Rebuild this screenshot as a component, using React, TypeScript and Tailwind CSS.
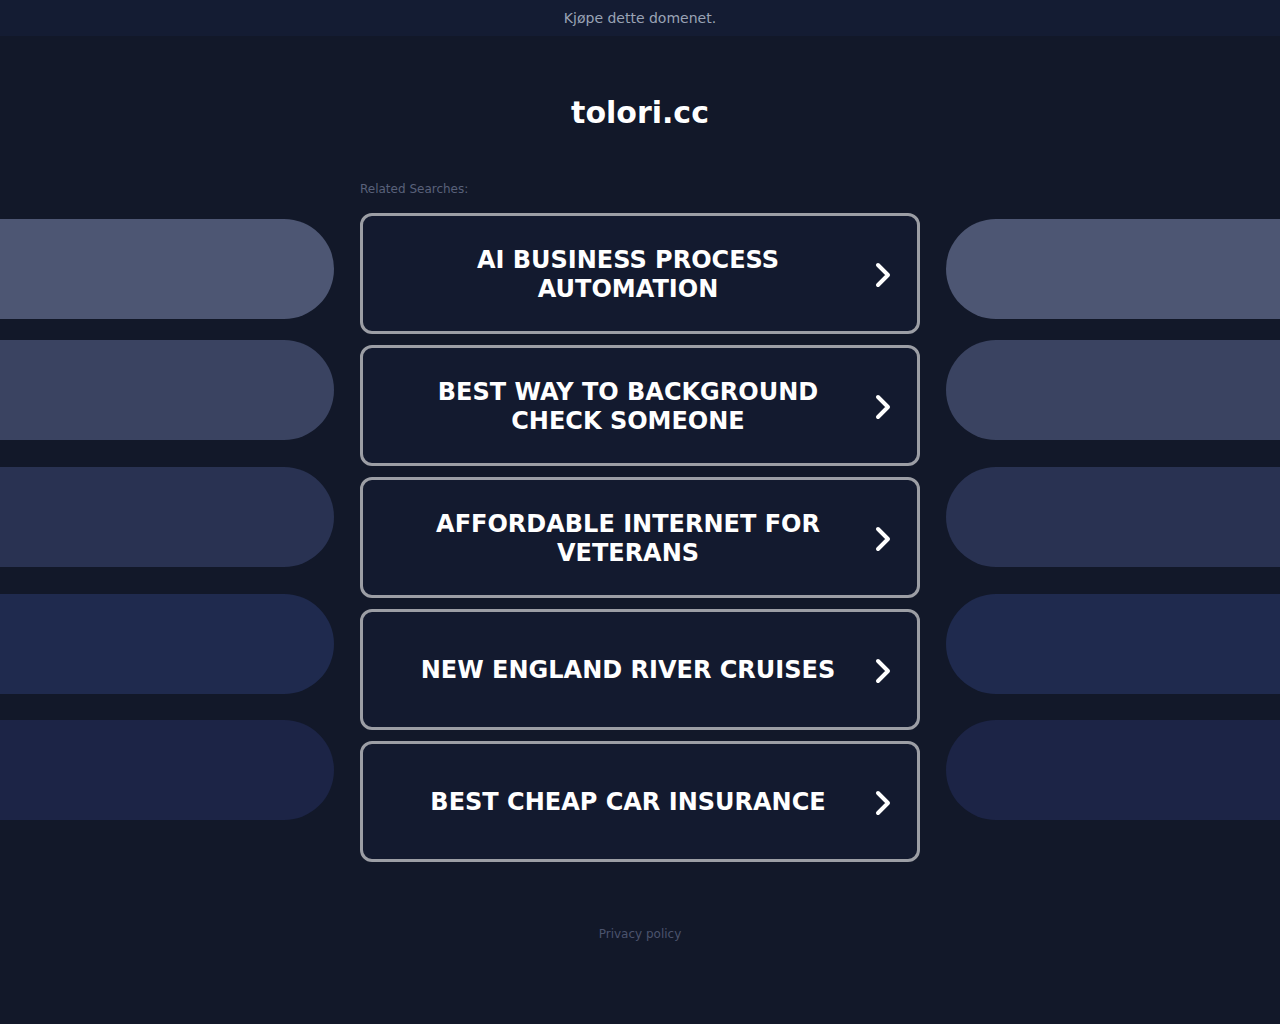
import React from "react";

const searches = [
  ["AI BUSINESS PROCESS", "AUTOMATION"],
  ["BEST WAY TO BACKGROUND", "CHECK SOMEONE"],
  ["AFFORDABLE INTERNET FOR", "VETERANS"],
  ["NEW ENGLAND RIVER CRUISES"],
  ["BEST CHEAP CAR INSURANCE"],
];

const pills = [
  { color: "bg-[#4d5673]", mt: "mt-0" },
  { color: "bg-[#3a4361]", mt: "mt-[21px]" },
  { color: "bg-[#293252]", mt: "mt-[27px]" },
  { color: "bg-[#1f2a4e]", mt: "mt-[27px]" },
  { color: "bg-[#1c2446]", mt: "mt-[26px]" },
];

function Chevron() {
  return (
    <svg width="24" height="28" viewBox="0 0 24 28" fill="none">
      <path
        d="M7 4 L17 14 L7 24"
        stroke="white"
        strokeWidth="4"
        strokeLinecap="round"
        strokeLinejoin="round"
      />
    </svg>
  );
}

function Pills({ side }: { side: "left" | "right" }) {
  return (
    <div className="flex flex-col pt-[38px]">
      {pills.map((p, i) => (
        <div
          key={i}
          className={`${p.mt} h-[100px] ${p.color} ${
            side === "left" ? "rounded-r-[50px]" : "rounded-l-[50px]"
          }`}
        />
      ))}
    </div>
  );
}

export default function App() {
  return (
    <div className="min-h-[1024px] bg-[#121829] font-['DejaVu_Sans',sans-serif]">
      <div className="flex h-[36px] items-center justify-center bg-[#141c33] text-[14px] text-[#9aa3b5]">
        Kjøpe dette domenet.
      </div>

      <h1 className="mt-[59px] text-center text-[30px] font-bold leading-[36px] text-white">
        tolori.cc
      </h1>

      <div className="mt-[50px] grid grid-cols-[334px_560px_334px] gap-x-[26px]">
        <Pills side="left" />

        <div>
          <div className="text-[12px] leading-[16px] text-[#59617a]">
            Related Searches:
          </div>
          <div className="mt-[16px] flex flex-col gap-[11px]">
            {searches.map((lines, i) => (
              <a
                key={i}
                href="#"
                className="flex h-[121px] items-center rounded-[12px] border-[3px] border-[#9c9ea5] bg-[#131a2f] px-[22px] pt-[2px]"
              >
                <div className="flex-1 text-center text-[24px] font-bold leading-[29px] text-white">
                  {lines.map((l, j) => (
                    <div key={j}>{l}</div>
                  ))}
                </div>
                <Chevron />
              </a>
            ))}
          </div>
        </div>

        <Pills side="right" />
      </div>

      <div className="mt-[64px] text-center text-[12px] leading-[16px] text-[#4b536d]">
        Privacy policy
      </div>
    </div>
  );
}
